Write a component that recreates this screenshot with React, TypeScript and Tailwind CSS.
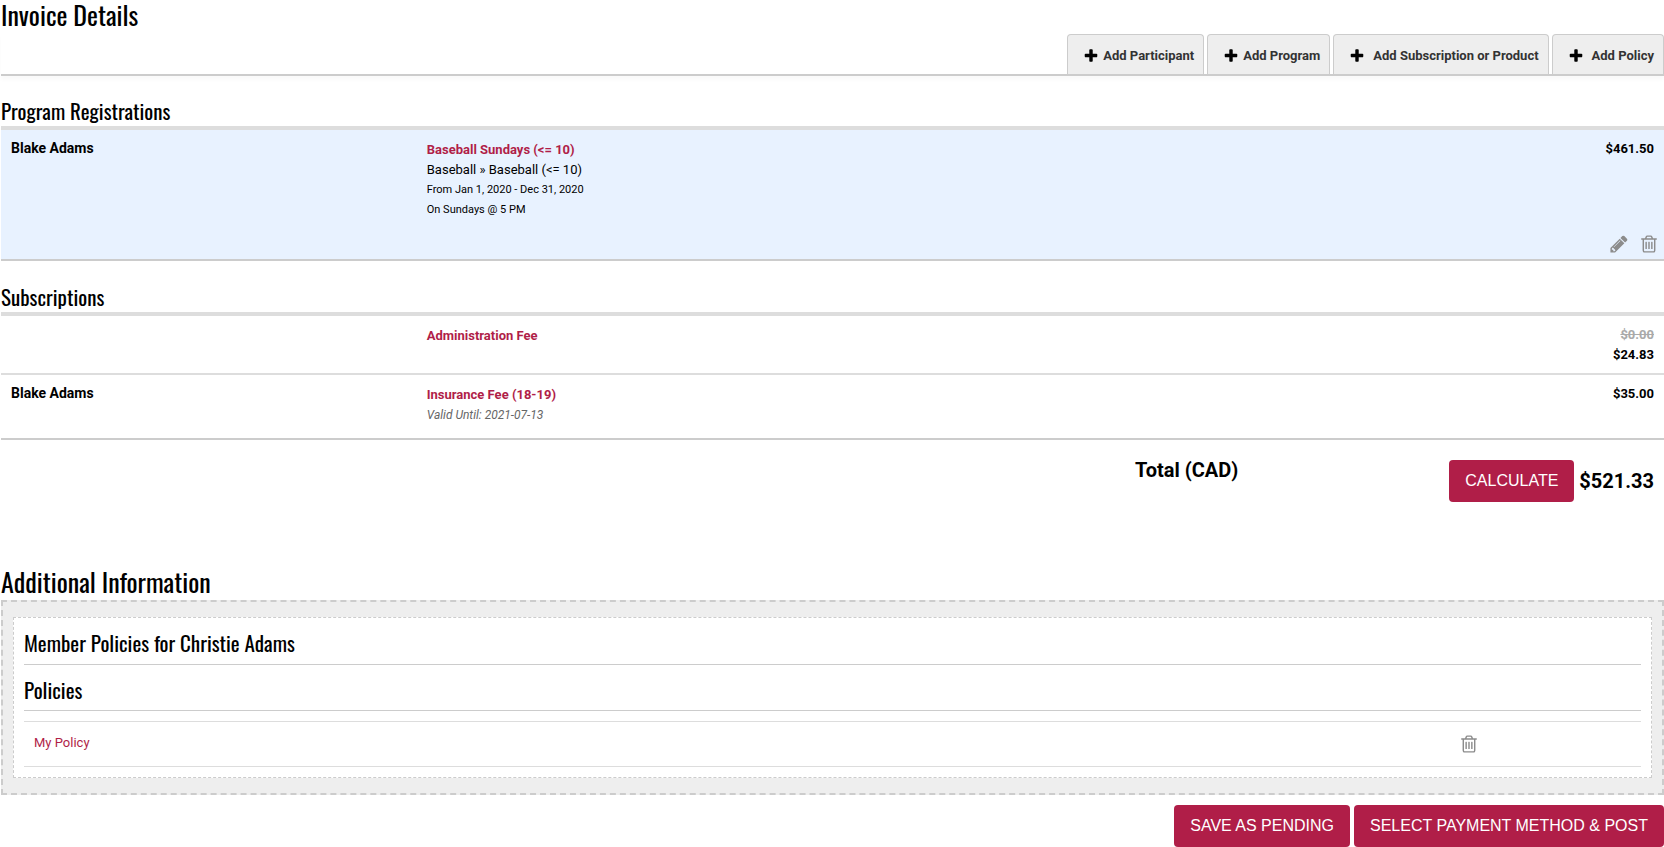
import type { ReactNode } from "react";

interface InvoiceRow {
  id: number;
  member?: string;
  item: string;
  details?: ReactNode;
  oldPrice?: string;
  price: string;
  editable?: boolean;
}

const actions = [
  { label: "Add Participant", gap: "gap-1" },
  { label: "Add Program", gap: "gap-1" },
  { label: "Add Subscription or Product", gap: "gap-2" },
  { label: "Add Policy", gap: "gap-2" },
];

const programs: InvoiceRow[] = [
  {
    id: 1,
    member: "Blake Adams",
    item: "Baseball Sundays (<= 10)",
    details: (
      <>
        <p>Baseball » Baseball (&lt;= 10)</p>
        <p className="text-[11px] leading-5">From Jan 1, 2020 - Dec 31, 2020</p>
        <p className="text-[11px] leading-5">On Sundays @ 5 PM</p>
      </>
    ),
    price: "$461.50",
    editable: true,
  },
];

const subscriptions: InvoiceRow[] = [
  { id: 1, item: "Administration Fee", oldPrice: "$0.00", price: "$24.83" },
  {
    id: 2,
    member: "Blake Adams",
    item: "Insurance Fee (18-19)",
    details: (
      <p className="pb-[5px] text-xs leading-5 text-[#666] italic">
        Valid Until: 2021-07-13
      </p>
    ),
    price: "$35.00",
  },
];

const icons = {
  plus: "M1600 736v192q0 40-28 68t-68 28h-416v416q0 40-28 68t-68 28h-192q-40 0-68-28t-28-68v-416h-416q-40 0-68-28t-28-68v-192q0-40 28-68t68-28h416v-416q0-40 28-68t68-28h192q40 0 68 28t28 68v416h416q40 0 68 28t28 68z",
  pencil:
    "M491 1536l91-91-235-235-91 91v107h128v128h107zm523-928q0-22-22-22-10 0-17 7l-542 542q-7 7-7 17 0 22 22 22 10 0 17-7l542-542q7-7 7-17zm-54-192l416 416-832 832h-416v-416zm683 96q0 53-37 90l-166 166-416-416 166-165q36-38 90-38 53 0 91 38l235 234q37 39 37 91z",
  trash:
    "M704 736v576q0 14-9 23t-23 9h-64q-14 0-23-9t-9-23v-576q0-14 9-23t23-9h64q14 0 23 9t9 23zm256 0v576q0 14-9 23t-23 9h-64q-14 0-23-9t-9-23v-576q0-14 9-23t23-9h64q14 0 23 9t9 23zm256 0v576q0 14-9 23t-23 9h-64q-14 0-23-9t-9-23v-576q0-14 9-23t23-9h64q14 0 23 9t9 23zm128 724v-948h-896v948q0 22 7 40.5t14.5 27 10.5 8.5h832q3 0 10.5-8.5t14.5-27 7-40.5zm-672-1076h448l-48-117q-7-9-17-11h-317q-10 2-17 11zm928 32v64q0 14-9 23t-23 9h-96v948q0 83-47 143.5t-113 60.5h-832q-66 0-113-58.5t-47-141.5v-952h-96q-14 0-23-9t-9-23v-64q0-14 9-23t23-9h309l70-167q15-37 54-63t79-26h320q40 0 79 26t54 63l70 167h309q14 0 23 9t9 23z",
};

function Icon({ name, className }: { name: keyof typeof icons; className: string }) {
  return (
    <svg viewBox="0 0 1792 1792" fill="currentColor" aria-hidden="true" className={className}>
      <path d={icons[name]} />
    </svg>
  );
}

function IconButton({ name, label }: { name: keyof typeof icons; label: string }) {
  return (
    <button type="button" aria-label={label} className="block cursor-pointer text-[#8c8c8c]">
      <Icon name={name} className="size-5" />
    </button>
  );
}

function Heading({ children }: { children: ReactNode }) {
  return (
    <h3 className="font-[Oswald,sans-serif] text-[21px] leading-[30px]">{children}</h3>
  );
}

function InvoiceTable({ rows }: { rows: InvoiceRow[] }) {
  return (
    <div className="border-t-4 border-[#ddd]">
      <table className="w-full table-fixed border-collapse">
        <tbody>
          {rows.map((row) => (
            <tr
              key={row.id}
              className={`border-b-2 border-[#ddd] align-top last:border-[#ccc] ${
                row.editable ? "bg-[#e8f2ff]" : ""
              }`}
            >
              <td className="w-1/4 px-2.5 pt-2 text-sm leading-5 font-bold">{row.member}</td>
              <td className="w-1/2 px-2.5 pt-2.5 pb-2 leading-5">
                <a href="#" className="block font-bold text-[#b01e48]">
                  {row.item}
                </a>
                {row.details}
              </td>
              <td
                className={`w-1/4 pt-[9px] text-right leading-5 font-bold ${
                  row.editable ? "pb-[5px]" : "pb-2"
                }`}
              >
                {row.oldPrice && (
                  <p className="pr-2.5 text-[#aaa] line-through">{row.oldPrice}</p>
                )}
                <p className="pr-2.5">{row.price}</p>
                {row.editable && (
                  <div className="mt-[75px] flex justify-end gap-2.5 pr-[5px]">
                    <IconButton name="pencil" label="Edit registration" />
                    <IconButton name="trash" label="Delete registration" />
                  </div>
                )}
              </td>
            </tr>
          ))}
        </tbody>
      </table>
    </div>
  );
}

export default function App() {
  return (
    <main className="bg-white pl-px font-[Roboto,sans-serif] text-[13px] text-black">
      <h2 className="font-[Oswald,sans-serif] text-[26px] leading-[30px]">Invoice Details</h2>
      <nav className="mt-1 flex justify-end gap-[3px] border-b-2 border-[#ccc] shadow-[0_4px_4px_#fafafa]">
        {actions.map(({ label, gap }) => (
          <button
            key={label}
            type="button"
            className={`flex h-10 cursor-pointer items-center rounded-t-sm border border-b-0 border-[#ccc] bg-[#eee] pt-0.5 pr-[9px] pl-[15px] font-bold text-[#333] ${gap}`}
          >
            <Icon name="plus" className="size-4 text-black" />
            {label}
          </button>
        ))}
      </nav>

      <section className="mt-5">
        <Heading>Program Registrations</Heading>
        <InvoiceTable rows={programs} />
      </section>

      <section className="mt-[21px]">
        <Heading>Subscriptions</Heading>
        <InvoiceTable rows={subscriptions} />
      </section>

      <div className="flex justify-end pt-5 text-xl font-bold">
        <p className="pr-2.5 leading-5">Total (CAD)</p>
        <div className="flex w-1/4 items-center justify-end gap-[5px] pr-2.5">
          <button
            type="button"
            className="h-[42px] cursor-pointer rounded-sm bg-[#b01e48] px-4 font-['Liberation_Sans',sans-serif] text-base font-normal text-white"
          >
            CALCULATE
          </button>
          <span>$521.33</span>
        </div>
      </div>

      <h2 className="mt-16 font-[Oswald,sans-serif] text-[26px] leading-8">
        Additional Information
      </h2>
      <section className="mt-0.5 border-2 border-dashed border-[#ccc] bg-[#eee] px-2.5 py-[15px]">
        <div className="border border-dashed border-[#ccc] bg-white px-2.5 pb-2.5">
          <div className="border-b border-[#ccc] pt-2.5 pb-1.5">
            <Heading>Member Policies for Christie Adams</Heading>
          </div>
          <div className="mb-2.5 border-b border-[#ccc] pt-2.5 pb-[5px]">
            <Heading>Policies</Heading>
          </div>
          <table className="w-full table-fixed border-collapse">
            <tbody>
              <tr className="h-[45px] border-y border-[#ddd]">
                <td className="px-2.5 pb-0.5">
                  <a href="#" className="text-[#b01e48]">
                    My Policy
                  </a>
                </td>
                <td className="w-[12%] pl-3">
                  <IconButton name="trash" label="Delete policy" />
                </td>
              </tr>
            </tbody>
          </table>
        </div>
      </section>

      <div className="mt-2.5 flex justify-end gap-1 font-['Liberation_Sans',sans-serif] text-base text-white">
        <button type="button" className="h-[42px] cursor-pointer rounded-sm bg-[#b01e48] px-4">
          SAVE AS PENDING
        </button>
        <button type="button" className="h-[42px] cursor-pointer rounded-sm bg-[#b01e48] px-4">
          SELECT PAYMENT METHOD &amp; POST
        </button>
      </div>
    </main>
  );
}
